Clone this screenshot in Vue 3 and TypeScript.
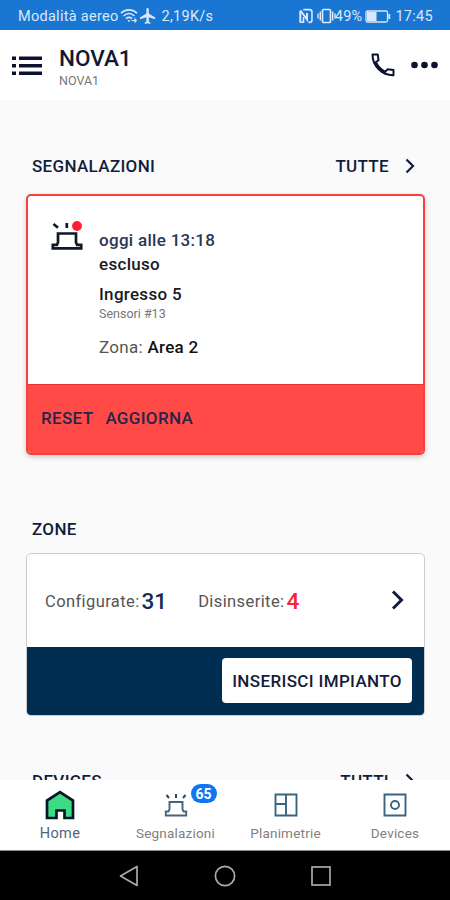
<script setup lang="ts">
interface NavItem {
  id: 'home' | 'alerts' | 'plans' | 'devices'
  label: string
  badge?: number
}

const navItems: NavItem[] = [
  { id: 'home', label: 'Home' },
  { id: 'alerts', label: 'Segnalazioni', badge: 65 },
  { id: 'plans', label: 'Planimetrie' },
  { id: 'devices', label: 'Devices' },
]
const active: NavItem['id'] = 'home'
</script>

<template>
  <div class="screen">
    <div class="status">
      <span class="carrier">Modalità aereo</span>
      <svg class="wifi" width="18" height="16" viewBox="0 0 18 16" fill="none" stroke="currentColor" stroke-width="1.6">
        <path d="M1 5.2C5.500 .8 12.500 .8 17 5.200M3.500 8C7 4.800 11 4.800 14.500 8M6 10.700C8 9 10 9 12 10.700" />
        <path d="M7.500 12.200h3L9 14.200z" fill="currentColor" stroke="none" />
        <path d="M11.500 12.500h4.500M14.500 10.500l1.800 2-1.800 2" stroke-width="1.200" />
      </svg>
      <svg class="plane" width="16" height="16" viewBox="2 2 20 20" fill="currentColor">
        <path d="M21 16v-2l-8-5V3.500a1.500 1.500 0 0 0-3 0V9l-8 5v2l8-2.500V19l-2 1.500V22l3.500-1 3.500 1v-1.500L13 19v-5.500z" />
      </svg>
      <span class="speed">2,19K/s</span>
      <div class="status-right">
        <svg width="14" height="16" viewBox="0 0 14 16" fill="none" stroke="currentColor">
          <path d="M1.300 14.500V2.500M1.500 2.500 8 11.500V5" stroke-width="2" />
          <path d="M4.300 1.600H10.500Q13 1.600 13 4v8q0 2.400-2.500 2.400H9.500M4.500 9v5.200H1" stroke-width="1.600" />
        </svg>
        <svg class="vibrate" width="19" height="16" viewBox="0 0 19 16" fill="none" stroke="currentColor" stroke-width="1.700">
          <rect x="5.500" y="1.500" width="8" height="13" rx="1" />
          <path d="M3.300 3.500v9M15.700 3.500v9M1 5.500v5M18 5.500v5" stroke-width="1.400" />
        </svg>
        <span class="percent">49%</span>
        <svg class="battery" width="26" height="13" viewBox="0 0 26 13">
          <rect x="1" y="1" width="21.500" height="11" rx="1.500" fill="none" stroke="currentColor" stroke-width="1.300" />
          <rect x="2" y="2" width="9.500" height="9" fill="currentColor" />
          <path d="M24.300 4v5" stroke="currentColor" stroke-width="1.800" />
        </svg>
        <span class="clock">17:45</span>
      </div>
    </div>

    <header class="topbar">
      <svg class="menu" width="30" height="20" viewBox="0 0 30 20" stroke="currentColor" stroke-width="3.600">
        <path d="M0 2.200h4M7 2.200h23M0 9.800h4M7 9.800h23M0 17.300h4M7 17.300h23" />
      </svg>
      <div class="heading">
        <h1>NOVA1</h1>
        <p>NOVA1</p>
      </div>
      <svg class="phone" width="24" height="24" viewBox="0 0 24 24" fill="none" stroke="currentColor" stroke-width="2" stroke-linejoin="round">
        <path d="M1.500 1.500H6.800L7.500 7.200 4.800 9.300C7 13.500 10 16.700 14.200 18.900L16.500 16.300 22.500 17V22.200C11 22.500 1.500 13 1.500 1.500Z" />
      </svg>
      <svg class="dots" width="27" height="8" viewBox="0 0 27 8" fill="currentColor">
        <circle cx="3.500" cy="4" r="3.300" /><circle cx="13.500" cy="4" r="3.300" /><circle cx="23.500" cy="4" r="3.300" />
      </svg>
    </header>

    <main class="content">
      <section class="alert-section">
        <div class="section-head">
          <h2>SEGNALAZIONI</h2>
          <span class="all">TUTTE</span>
          <svg width="10" height="16" viewBox="0 0 10 16" fill="none" stroke="currentColor" stroke-width="2.200"><path d="M1.500 1.500 8 8l-6.500 6.500" /></svg>
        </div>
        <div class="card alert-card">
          <div class="alert-body">
            <svg class="siren" width="32" height="30" viewBox="0 0 32 30" fill="none" stroke="#101827">
              <path d="M1.800 27.300v-3.500h4.100L7 21.500v-9h18v9l1.100 2.300h4.100v3.500z" stroke-width="2.700" />
              <path d="m2.500 3 4.500 3.800M15.800 2v5" stroke-width="2.700" />
              <circle cx="26" cy="5" r="4.900" fill="#fa1f35" stroke="none" />
            </svg>
            <div class="details">
              <p class="when">oggi alle 13:18</p>
              <p class="event">escluso</p>
              <p class="source">Ingresso 5</p>
              <p class="sensor">Sensori #13</p>
              <p class="zone">Zona: <b>Area 2</b></p>
            </div>
          </div>
          <div class="alert-actions">
            <span class="reset">RESET</span>
            <span class="refresh">AGGIORNA</span>
          </div>
        </div>
      </section>

      <section class="zone-section">
        <div class="section-head"><h2 class="zone-title">ZONE</h2></div>
        <div class="card zone-card">
          <div class="zone-body">
            <span class="label configured">Configurate:</span><b class="num">31</b>
            <span class="label disarmed">Disinserite:</span><b class="num red">4</b>
            <svg class="go" width="13" height="20" viewBox="0 0 13 20" fill="none" stroke="currentColor" stroke-width="3"><path d="M2 1.500 10.500 10 2 18.500" /></svg>
          </div>
          <div class="zone-actions"><button type="button">INSERISCI IMPIANTO</button></div>
        </div>
      </section>

      <section class="device-section">
        <div class="section-head">
          <h2 class="dev-title">DEVICES</h2>
          <span class="all">TUTTI</span>
          <svg width="10" height="16" viewBox="0 0 10 16" fill="none" stroke="currentColor" stroke-width="2.200"><path d="M1.500 1.500 8 8l-6.500 6.500" /></svg>
        </div>
      </section>
    </main>

    <nav class="tabs">
      <div v-for="item in navItems" :key="item.id" class="tab" :class="{ active: item.id === active }">
        <div class="tab-icon">
          <svg v-if="item.id === 'home'" width="30" height="30" viewBox="0 0 30 30">
            <path d="M2 28V10.500L15 2l13 8.500V28h-8.500v-7.500h-8V28z" fill="#3ddc84" stroke="#09152c" stroke-width="2.700" />
          </svg>
          <svg v-else-if="item.id === 'alerts'" width="24" height="24" viewBox="0 0 24 24" fill="none" stroke="#47647c" stroke-width="1.900">
            <path d="M1.800 22.500v-4h2.600l1.100-2V9h13v7.500l1.100 2h2.600v4z" />
            <path d="m2.500 2 2.500 3M12 1v4M21.500 2 19 5" stroke="#294b68" stroke-width="2" />
          </svg>
          <svg v-else-if="item.id === 'plans'" width="24" height="24" viewBox="0 0 24 24" fill="none" stroke="#396580" stroke-width="1.900">
            <path d="M1.500 1.500h21v21h-21zM12 1.500v21M1.500 11H12" />
          </svg>
          <svg v-else width="24" height="24" viewBox="0 0 24 24" fill="none" stroke="#396580" stroke-width="1.900">
            <path d="M1.500 1.500h21v21h-21z" /><circle cx="12" cy="12" r="4" />
          </svg>
          <span v-if="item.badge" class="badge">{{ item.badge }}</span>
        </div>
        <span class="tab-label">{{ item.label }}</span>
      </div>
    </nav>

    <div class="system">
      <svg width="20" height="22" viewBox="0 0 20 22" fill="none" stroke="currentColor" stroke-width="1.700" stroke-linejoin="round"><path d="M1.500 11 18 1.500v19z" /></svg>
      <svg width="22" height="22" viewBox="0 0 22 22" fill="none" stroke="currentColor" stroke-width="1.700"><circle cx="11" cy="11" r="9.600" /></svg>
      <svg width="20" height="20" viewBox="0 0 20 20" fill="none" stroke="currentColor" stroke-width="1.700"><rect x="1" y="1" width="18" height="18" /></svg>
    </div>
  </div>
</template>

<style>
body { margin: 0; overflow: hidden; }
</style>

<style scoped>
.screen { width: 450px; height: 900px; display: flex; flex-direction: column; background: #fafafa; font-family: Roboto, "Liberation Sans", sans-serif; color: #111d3d; overflow: hidden; }
.screen * { box-sizing: border-box; }
h1, h2, p { margin: 0; }
svg { display: block; flex: none; }
span, b { white-space: nowrap; }
h2, .all, .reset, .refresh { font-size: 17px; line-height: 30px; font-weight: 500; letter-spacing: .33px; }

.status { flex: none; height: 30px; background: #1976d2; color: #d9e9fb; display: flex; align-items: center; padding: 2px 16px 0 18px; font-size: 14.500px; }
.carrier, .speed { letter-spacing: .28px; }
.wifi { margin-left: 1px; }
.plane { margin-left: 2px; }
.speed { margin-left: 6px; }
.status-right { margin-left: auto; display: flex; align-items: center; }
.vibrate { margin-left: 4px; margin-right: -1px; }
.battery { margin: 0 4px 0 3px; }
.clock { letter-spacing: .3px; }
.percent { letter-spacing: .2px; }
.status-right { padding-right: 1px; }

.topbar { flex: none; height: 70px; background: #fff; display: flex; align-items: center; padding: 0 12px; color: #0a1230; }
.menu { margin-top: 1px; }
.heading { margin: 2px 0 0 17px; }
h1 { font-size: 22.500px; line-height: 28px; font-weight: 500; color: #111936; }
.heading p { font-size: 12.500px; line-height: 16px; color: #777; margin-top: 1px; }
.phone { margin-left: auto; }
.dots { margin-left: 16px; }

.content { flex: none; height: 680px; padding: 51px 25px 0 26px; overflow: hidden; }
.section-head { height: 30px; display: flex; align-items: center; padding: 0 10px 0 6px; }
.all { margin-left: auto; margin-right: 16px; }
.card { border-radius: 5px; display: flex; flex-direction: column; background: #fff; overflow: hidden; }
.alert-card { height: 261px; margin-top: 13px; border: 2px solid #f5403e; box-shadow: 0 2px 5px rgba(0, 0, 0, .2); }
.alert-body { height: 188px; display: flex; padding: 25px 0 0 23px; }
.details { margin: 7px 0 0 16px; font-size: 17px; font-weight: 500; letter-spacing: .3px; color: #1b1b1f; }
.when { line-height: 24px; color: #26375a; }
.event { line-height: 23px; margin-top: 1px; }
.source { line-height: 24px; margin-top: 6px; }
.sensor { font-size: 12.500px; line-height: 16px; font-weight: 400; letter-spacing: 0; color: #777; }
.zone { line-height: 24px; margin-top: 13px; font-weight: 400; color: #555; }
.zone b { font-weight: 500; color: #111; }
.alert-actions { flex: 1; background: #ff4a48; border-top: 1px solid #ed302c; display: flex; align-items: center; padding: 0 0 2px 13px; color: #2a2448; }
.refresh { margin-left: 12px; }

.zone-section { margin-top: 59px; }
.zone-card { height: 163px; margin-top: 9px; border: 1px solid #ccc; }
.zone-body { height: 93px; display: flex; align-items: center; padding: 0 20px 0 18px; }
.label { font-size: 16.500px; letter-spacing: .4px; color: #555; margin-top: 1px; }
.num { font-size: 22.500px; font-weight: 500; margin: 1px 0 0 2px; color: #162b50; }
.red { color: #f52535; }
.disarmed { margin-left: 31px; }
.go { margin: -2px 0 0 auto; }
.zone-actions { flex: 1; background: #002d52; display: flex; align-items: center; justify-content: flex-end; padding: 0 12px 2px 0; }
button { width: 190px; height: 45px; border: 0; border-radius: 4px; background: #fff; color: #151b38; font: 500 17px Roboto, "Liberation Sans", sans-serif; letter-spacing: .36px; padding: 2px 0 0; white-space: nowrap; }
.device-section { margin-top: 50px; }

.tabs { flex: none; height: 71px; background: #fff; border-bottom: 1px solid #8b8b8b; display: grid; grid-template-columns: 120px 111px 109px 110px; }
.tab { display: flex; flex-direction: column; align-items: center; padding-top: 8px; }
.tab-icon { height: 34px; display: flex; align-items: center; position: relative; }
.tab-label { font-size: 13.500px; line-height: 20px; letter-spacing: .2px; color: #808080; margin-top: 1px; }
.active .tab-label { color: #506579; font-size: 14.500px; letter-spacing: .4px; line-height: 22px; }
.badge { position: absolute; left: 27px; top: -4px; width: 26px; height: 19px; border-radius: 10px; background: #0f75f0; color: #fff; font-size: 14px; line-height: 20px; font-weight: 700; text-align: center; }

.system { flex: 1; background: #000; color: #aaa; display: flex; align-items: center; justify-content: center; gap: 75px; }
</style>
